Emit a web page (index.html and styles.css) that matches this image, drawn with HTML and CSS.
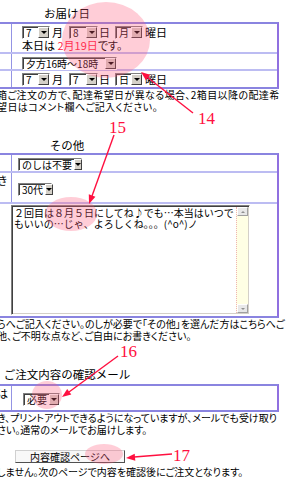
FILE: index.html
```html
<!DOCTYPE html>
<html lang="ja">
<head>
    <meta charset="UTF-8">
    <meta name="viewport" content="width=device-width, initial-scale=1.0">
    <title>ご注文フォーム</title>
    <link rel="stylesheet" href="styles.css">
</head>
<body>
    <div class="form">
        <!-- お届け日 -->
        <h2 class="sec-title first">お届け日</h2>
        <div class="box">
            <div class="row row-date">
                <div class="label"></div>
                <div class="field field-date">
                    <div class="dates">
                        <span class="sel sel-day"><span class="sel-text">7</span><span class="sel-btn"></span></span>
                        <span class="unit">月</span>
                        <span class="sel sel-day2"><span class="sel-text">8</span><span class="sel-btn"></span></span>
                        <span class="unit unit-tight">日</span>
                        <span class="sel sel-day"><span class="sel-text">月</span><span class="sel-btn"></span></span>
                        <span class="unit">曜日</span>
                    </div>
                    <div class="today">本日は <span class="today-date">2月19日</span>です。</div>
                </div>
            </div>
            <div class="row row-time">
                <div class="label"></div>
                <div class="field field-date">
                    <span class="sel sel-time"><span class="sel-text">夕方16時～18時</span><span class="sel-btn"></span></span>
                </div>
            </div>
            <div class="row row-second">
                <div class="label"></div>
                <div class="field field-date">
                    <div class="dates">
                        <span class="sel sel-day"><span class="sel-text">7</span><span class="sel-btn"></span></span>
                        <span class="unit">月</span>
                        <span class="sel sel-day2"><span class="sel-text">7</span><span class="sel-btn"></span></span>
                        <span class="unit unit-tight">日</span>
                        <span class="sel sel-day"><span class="sel-text">日</span><span class="sel-btn"></span></span>
                        <span class="unit">曜日</span>
                    </div>
                </div>
            </div>
        </div>
        <p class="note note-wide">箱ご注文の方で、配達希望日が異なる場合、2箱目以降の配達希<br>望日はコメント欄へご記入ください。</p>

        <!-- その他 -->
        <h2 class="sec-title">その他</h2>
        <div class="box">
            <div class="row row-noshi">
                <div class="label"></div>
                <div class="field field-other">
                    <span class="sel sel-noshi"><span class="sel-text">のしは不要</span><span class="sel-btn"></span></span>
                </div>
            </div>
            <div class="row row-age">
                <div class="label">年代をお聞き</div>
                <div class="field field-other">
                    <span class="sel sel-age"><span class="sel-text">30代</span><span class="sel-btn"></span></span>
                </div>
            </div>
            <div class="row row-memo">
                <div class="memo">
                    <textarea class="memo-text" wrap="off">２回目は８月５日にしてね♪でも…本当はいつで
もいいの…じゃ、よろしくね。。。(^o^)ノ</textarea>
                    <div class="scroll">
                        <div class="scroll-btn scroll-up"></div>
                        <div class="scroll-track"></div>
                        <div class="scroll-btn scroll-down"></div>
                    </div>
                </div>
            </div>
        </div>
        <p class="note">らへご記入ください。のしが必要で「その他」を選んだ方はこちらへご<br>他、ご不明な点など、ご自由にお書きください。</p>

        <!-- 確認メール -->
        <h2 class="sec-title third">ご注文内容の確認メール</h2>
        <div class="box">
            <div class="row row-mail">
                <div class="label">確認メールは</div>
                <div class="field field-mail">
                    <span class="sel sel-mail"><span class="sel-text">必要</span><span class="sel-btn"></span></span>
                </div>
            </div>
        </div>
        <p class="note">き、プリントアウトできるようになっていますが、メールでも受け取り<br>さい。通常のメールでお届けします。</p>

        <button class="btn-next" type="button">内容確認ページへ</button>
        <p class="note last">しません。次のページで内容を確認後にご注文となります。</p>
    </div>

    <!-- 説明用のマーク -->
    <svg class="marks" width="300" height="493" viewBox="0 0 300 493">
        <g fill="#ff5a7a" fill-opacity="0.3">
            <ellipse cx="106" cy="40" rx="44" ry="38"/>
            <ellipse cx="71" cy="214" rx="26" ry="17"/>
            <ellipse cx="47" cy="395" rx="15" ry="14"/>
            <ellipse cx="104" cy="454" rx="19" ry="10"/>
        </g>
        <g stroke="#ff1040" stroke-width="1.4" fill="none">
            <line x1="193" y1="113" x2="147" y2="77"/>
            <line x1="114" y1="135" x2="92" y2="196"/>
            <line x1="118" y1="356" x2="69" y2="392"/>
            <line x1="172" y1="454" x2="134" y2="457"/>
        </g>
        <g fill="#ff1040">
            <polygon points="141,72 150.2,74.8 145.9,80.3"/>
            <polygon points="89,204 95.4,196.7 88.8,194.3"/>
            <polygon points="62,397 71.3,394.5 67.2,388.9"/>
            <polygon points="126,458 135.3,460.7 134.7,453.7"/>
        </g>
        <g class="mark-num" fill="#ff1040">
            <text x="198" y="124">14</text>
            <text x="109" y="133">15</text>
            <text x="120" y="357">16</text>
            <text x="173" y="461">17</text>
        </g>
    </svg>
</body>
</html>
```

FILE: styles.css
```css
body {
    margin: 0;
    font-family: "Noto Sans CJK JP", "Liberation Sans", sans-serif;
    color: #000;
    background-color: #fff;
    overflow: hidden;
}

/* page is wider than the window, left part is cut off */
.form {
    margin-left: -80px;
    width: 359px;
}

.sec-title {
    margin: 0;
    width: 294px;
    padding: 25px 0 1px;
    text-align: center;
    font-size: 11.5px;
    font-weight: normal;
    line-height: 14px;
}

.sec-title.first {
    padding: 6px 0 2px;
}

.sec-title.third {
    padding: 25px 0 3px;
}

/* Form tables */
.box {
    border: 2px solid #8a84e0;
    border-right-color: #9070e0;
}

.row {
    display: flex;
    align-items: center;
    border-top: 2px solid #bcbcf2;
}

.row:first-child {
    border-top: none;
}

.row-date { height: 28px; align-items: stretch; }
.row-time { height: 15px; }
.row-second { height: 16px; }
.row-noshi { height: 16px; }
.row-age { height: 29px; }
.row-memo { height: 112px; align-items: flex-start; }
.row-mail { height: 24px; }

.label {
    box-sizing: border-box;
    width: 90px;
    align-self: stretch;
    border-right: 1px solid #9494e4;
    padding: 1px 3px 0 0;
    text-align: right;
    font-size: 11px;
    line-height: 13px;
    white-space: nowrap;
    overflow: hidden;
}

.field {
    flex: 1;
    font-size: 11px;
}

.field-date { padding-left: 10px; }
.field-other { padding-left: 6px; }
.field-mail { padding-left: 11px; }

.row-date .field {
    padding-top: 2px;
}

.dates {
    display: flex;
    align-items: center;
    height: 13px;
}

.unit {
    margin: 0 6px 0 2px;
    line-height: 13px;
}

.unit-tight {
    margin: 0 5px 0 1px;
}

.today {
    line-height: 13px;
    font-feature-settings: "palt";
}

.today-date {
    color: #ff2040;
}

/* old style select boxes */
.sel {
    box-sizing: border-box;
    display: inline-flex;
    align-items: center;
    height: 13px;
    border: 1px solid;
    border-color: #808080 #fff #fff #808080;
    box-shadow: inset 1px 1px 0 #404040;
    background-color: #fff;
    font-size: 10px;
    line-height: 11px;
    vertical-align: middle;
}

.sel-text {
    flex: 1;
    padding: 0 2px 0 3px;
    white-space: nowrap;
}

.sel-btn {
    box-sizing: border-box;
    width: 11px;
    height: 11px;
    align-self: flex-end;
    background-color: #d4d0c8;
    border: 1px solid;
    border-color: #fff #404040 #404040 #fff;
    display: flex;
    align-items: center;
    justify-content: center;
}

.sel-btn::after {
    content: "";
    border-left: 3px solid transparent;
    border-right: 3px solid transparent;
    border-top: 3px solid #000;
}

.sel-day { width: 28px; }
.sel-day2 { width: 29px; }
.sel-time { width: 95px; }
.sel-noshi { width: 64px; }
.sel-age { width: 34px; }
.sel-mail { width: 37px; }

/* comment box */
.memo {
    box-sizing: border-box;
    display: flex;
    width: 239px;
    height: 110px;
    margin: 1px 0 0 89px;
    border: 1px solid;
    border-color: #808080 #fff #fff #808080;
    box-shadow: inset 1px 1px 0 #404040, inset -1px -1px 0 #d4d0c8;
    background-color: #fff;
}

.memo-text {
    flex: 1;
    margin: 1px 0 0 1px;
    padding: 0 0 0 1px;
    border: none;
    outline: none;
    resize: none;
    overflow: hidden;
    background: transparent;
    font-family: "Noto Sans CJK JP", sans-serif;
    font-size: 10px;
    line-height: 11px;
    color: #000;
}

.scroll {
    width: 11px;
    margin: 1px 1px 1px 0;
    display: flex;
    flex-direction: column;
    background-color: #ffffe4;
    border-left: 1px dotted #f0b4b4;
}

.scroll-track {
    flex: 1;
}

.scroll-btn {
    box-sizing: border-box;
    height: 9px;
    background-color: #e8e8e8;
    border: 1px solid;
    border-color: #fff #a0a0a0 #a0a0a0 #fff;
    display: flex;
    align-items: center;
    justify-content: center;
}

.scroll-up::after {
    content: "";
    border-left: 2px solid transparent;
    border-right: 2px solid transparent;
    border-bottom: 2px solid #909090;
}

.scroll-down::after {
    content: "";
    border-left: 2px solid transparent;
    border-right: 2px solid transparent;
    border-top: 2px solid #909090;
}

/* notes under each table */
.note {
    margin: 0 0 0 77px;
    font-size: 10px;
    line-height: 12px;
    white-space: nowrap;
    font-feature-settings: "palt";
}

.note-wide {
    letter-spacing: 0.4px;
}

.note.last {
    margin-top: 3px;
}

.btn-next {
    display: block;
    box-sizing: border-box;
    width: 110px;
    height: 13px;
    margin: 14px 0 0 95px;
    padding: 0;
    background-color: #f8f8f8;
    border: 1px solid;
    border-color: #d0d0d0 #505050 #505050 #d0d0d0;
    font-family: "Noto Sans CJK JP", sans-serif;
    font-size: 10px;
    line-height: 11px;
    color: #000;
}

/* red arrows and numbers drawn over the page */
.marks {
    position: absolute;
    top: 0;
    left: 0;
    pointer-events: none;
}

.mark-num {
    font-family: "Liberation Serif", serif;
    font-size: 17px;
}
```
